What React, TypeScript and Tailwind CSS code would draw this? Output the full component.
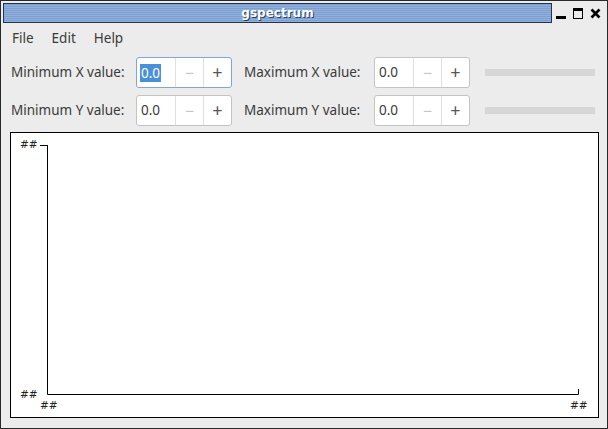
import React from 'react'

const SpinButton = ({ focused = false }: { focused?: boolean }) => (
  <div
    className={
      'flex h-[31px] w-[96px] rounded-[3px] border bg-white ' +
      (focused ? 'border-[#7ea6d6]' : 'border-[#c4c4c4]')
    }
  >
    <div className="flex w-[38px] items-center pl-[3px]">
      {focused ? (
        <span className="bg-[#4a90d9] px-[1px] leading-[18px] text-white">0.0</span>
      ) : (
        <span className="px-[1px] text-[#3a3a3a]">0.0</span>
      )}
    </div>
    <div className="flex w-[28px] items-center justify-center border-l border-[#e0e0e0] text-[16px] text-[#c6c6c6]">
      −
    </div>
    <div className="flex w-[28px] items-center justify-center border-l border-[#e0e0e0] text-[18px] text-[#555753]">
      +
    </div>
  </div>
)

const Row = ({ axis, focused }: { axis: string; focused?: boolean }) => (
  <div className="flex h-[31px] items-center">
    <span className="w-[126px] pl-[1px]">Minimum {axis} value:</span>
    <SpinButton focused={focused} />
    <span className="ml-[12px] w-[130px]">Maximum {axis} value:</span>
    <SpinButton />
    <div className="ml-[15px] h-[7px] w-[110px] bg-[#d6d6d6]" />
  </div>
)

const Plot = () => (
  <svg width="587" height="284" className="block" style={{ fontFamily: '"DejaVu Sans", sans-serif' }}>
    <path d="M36.5 12 V261.5 H567.5 V256" fill="none" stroke="#000" strokeWidth="1" />
    <path d="M29 12.5 H36" stroke="#000" strokeWidth="1" />
    <text x="9" y="15" fontSize="10.5" fill="#222">##</text>
    <text x="9" y="265" fontSize="10.5" fill="#222">##</text>
    <text x="29" y="276" fontSize="10.5" fill="#222">##</text>
    <text x="559" y="276" fontSize="10.5" fill="#222">##</text>
  </svg>
)

export default function App() {
  return (
    <div
      className="flex h-[429px] w-[608px] flex-col border border-[#2a2a2a] bg-[#ececec] text-[13.5px] text-[#3a3a3a]"
      style={{ fontFamily: '"Noto Sans", sans-serif' }}
    >
      {/* title bar */}
      <div className="flex items-center pl-[2px] pt-[2px]">
        <div className="flex h-[20px] w-[549px] items-center justify-center border border-[#23344c] bg-[repeating-linear-gradient(to_bottom,#7c9fd1_0px,#7c9fd1_1px,#91b0dc_1px,#91b0dc_2px)]">
          <span
            className="text-[12px] font-bold text-white [text-shadow:1px_1px_0_#2b3e5c]"
            style={{ fontFamily: '"DejaVu Sans", sans-serif' }}
          >
            gspectrum
          </span>
        </div>
        <div className="flex flex-1 items-center justify-around pr-[2px] pt-[1px]">
          <span className="mt-[8px] block h-[3px] w-[10px] bg-black" />
          <span className="block h-[11px] w-[10px] border border-black border-t-[3px]" />
          <svg width="11" height="11" viewBox="0 0 11 11">
            <path d="M1.5 1.5 L9.5 9.5 M9.5 1.5 L1.5 9.5" stroke="#000" strokeWidth="2.6" />
          </svg>
        </div>
      </div>

      {/* menu */}
      <div className="flex h-[29px] items-center gap-[18px] pl-[11px] pt-[2px]">
        <span>File</span>
        <span>Edit</span>
        <span>Help</span>
      </div>

      {/* controls */}
      <div className="mt-[5px] flex flex-col gap-[7px] pl-[9px]">
        <Row axis="X" focused />
        <Row axis="Y" />
      </div>

      {/* plot */}
      <div className="ml-[9px] mt-[6px] h-[286px] w-[589px] border border-black bg-white">
        <Plot />
      </div>
    </div>
  )
}
